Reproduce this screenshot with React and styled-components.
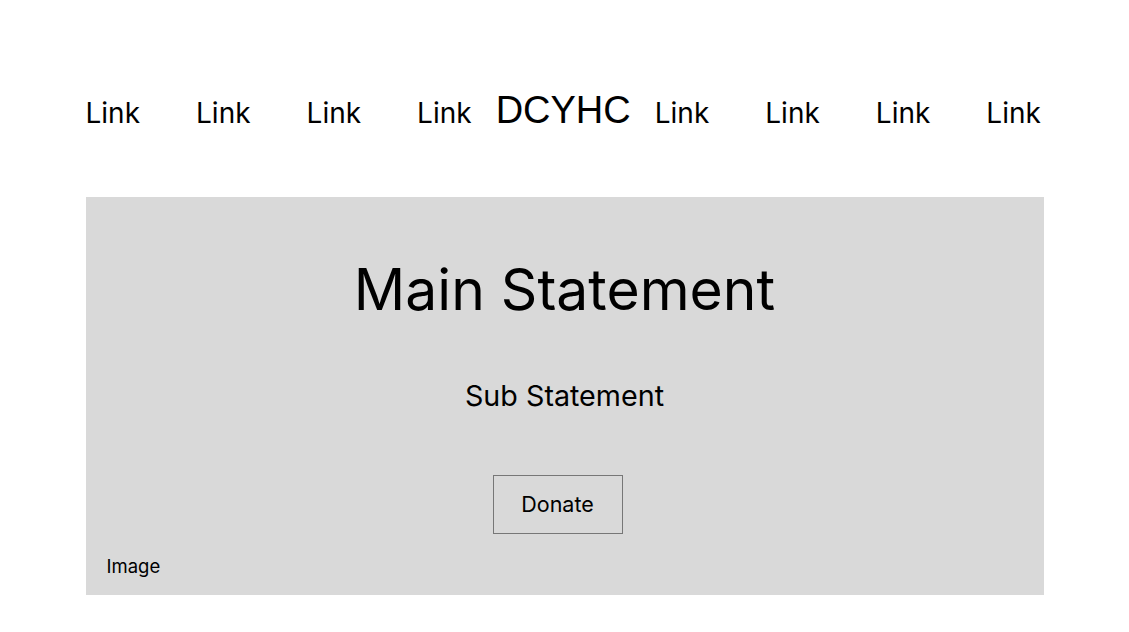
import React from 'react';
import styled, { createGlobalStyle } from 'styled-components';

const GlobalStyle = createGlobalStyle`
  body {
    margin: 0;
    background: #ffffff;
    font-family: Inter, "Liberation Sans", sans-serif;
    color: #000000;
  }
`;

const Page = styled.div`
  width: 958px;
  margin: 0 auto;
  padding-top: 88px;
`;

const Nav = styled.nav`
  display: flex;
  align-items: baseline;
  gap: 24px;
`;

const LinkGroup = styled.div`
  display: flex;
  gap: 56px;
`;

const NavLink = styled.a`
  font-size: 28px;
  line-height: 1.2;
  color: #000000;
  text-decoration: none;
`;

const Logo = styled.div`
  font-family: "Liberation Sans", Arial, sans-serif;
  font-size: 38px;
  line-height: 1.2;
`;

const Hero = styled.section`
  margin-top: 63.5px;
  background: #d9d9d9;
  display: flex;
  flex-direction: column;
  align-items: center;
  padding: 59px 0 17px;
`;

const MainStatement = styled.h1`
  margin: 0;
  font-size: 57px;
  font-weight: 400;
  line-height: 1.2;
`;

const SubStatement = styled.p`
  margin: 55px 0 0;
  font-size: 28.7px;
  line-height: 1.2;
`;

const DonateButton = styled.button`
  margin: 61px 14px 0 0;
  width: 130px;
  height: 59px;
  background: transparent;
  border: 1px solid #777777;
  font-family: inherit;
  font-size: 21.5px;
  color: #000000;
  cursor: pointer;
`;

const ImageLabel = styled.span`
  align-self: flex-start;
  margin: 21.5px 0 0 21px;
  font-size: 18.5px;
  line-height: 1.2;
`;

const App = () => {
  const left = ['Link', 'Link', 'Link', 'Link'];
  const right = ['Link', 'Link', 'Link', 'Link'];

  return (
    <>
      <GlobalStyle />
      <Page>
        <Nav>
          <LinkGroup>
            {left.map((l, i) => (
              <NavLink key={i} href="#">{l}</NavLink>
            ))}
          </LinkGroup>
          <Logo>DCYHC</Logo>
          <LinkGroup>
            {right.map((l, i) => (
              <NavLink key={i} href="#">{l}</NavLink>
            ))}
          </LinkGroup>
        </Nav>
        <Hero>
          <MainStatement>Main Statement</MainStatement>
          <SubStatement>Sub Statement</SubStatement>
          <DonateButton>Donate</DonateButton>
          <ImageLabel>Image</ImageLabel>
        </Hero>
      </Page>
    </>
  );
};

export default App;
